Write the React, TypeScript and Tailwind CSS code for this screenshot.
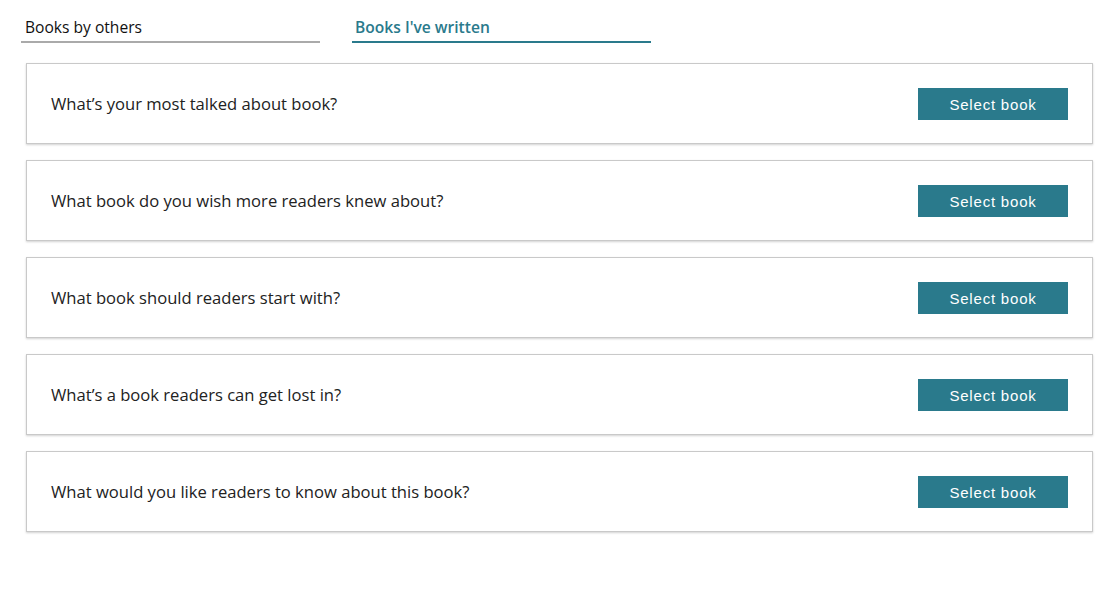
const questions = [
  "What\u2019s your most talked about book?",
  "What book do you wish more readers knew about?",
  "What book should readers start with?",
  "What\u2019s a book readers can get lost in?",
  "What would you like readers to know about this book?",
];

function Tab({ label, active }: { label: string; active?: boolean }) {
  return (
    <div
      className={
        "w-[299px] border-b-2 pb-[4px] text-[15.6px] leading-[20px] " +
        (active ? "border-[#2a7a8c] pl-[3px] font-semibold text-[#2a7a8c]" : "border-[#aaaaaa] pl-1 text-[#111111]")
      }
    >
      {label}
    </div>
  );
}

export default function App() {
  return (
    <div className="min-h-[598px] w-[1116px] bg-white font-['Open_Sans',sans-serif]">
      <div className="flex gap-[32px] pl-[21px] pt-[17px]">
        <Tab label="Books by others" />
        <Tab label="Books I've written" active />
      </div>

      <div className="ml-[26px] mt-[20px] flex w-[1067px] flex-col gap-[16px]">
        {questions.map((q, i) => (
          <div
            key={i}
            className="flex h-[81px] items-center justify-between border border-[#c9c9c9] bg-white px-[24px] shadow-[0_1px_2px_rgba(0,0,0,0.18)]"
          >
            <span className="pt-[2px] text-[16.6px] text-[#222222]">{q}</span>
            <button className="h-[32px] w-[150px] bg-[#2a7a8c] pt-[4px] font-['Liberation_Sans',Arial,sans-serif] text-[15px] tracking-[0.8px] text-white">
              Select book
            </button>
          </div>
        ))}
      </div>
    </div>
  );
}
